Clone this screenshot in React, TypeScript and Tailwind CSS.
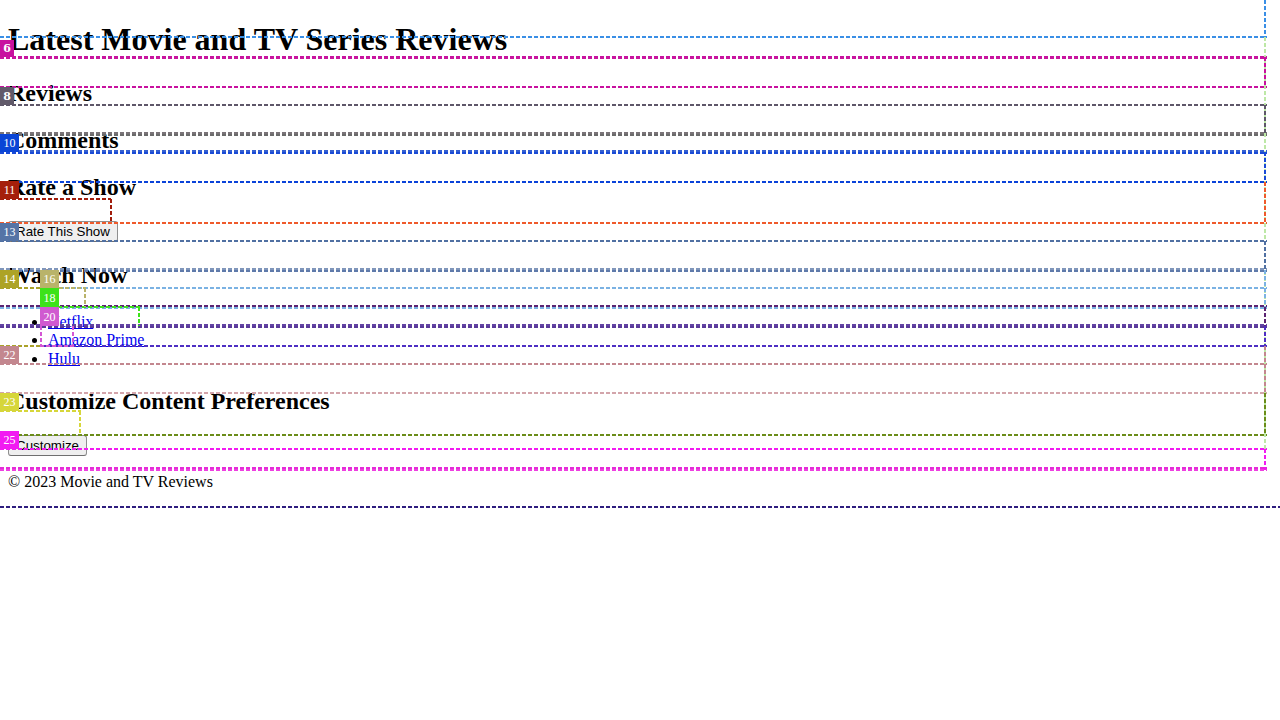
import React from "react";

type HSeg = [number, number, number, string];
type VSeg = [number, number, number, string];
type Badge = [string, number, number, number, number, string, boolean];

const FULL = 1267;

const VLINES_UNDER: VSeg[] = [[1264, 37, 449, "#bde8a6"]];

const HLINES: HSeg[] = [
  [36, 0, FULL, "#3a8fe6"],
  [56, 0, FULL, "#c8119f"],
  [57, 0, FULL, "#c9169f"],
  [86, 0, FULL, "#c8119f"],
  [104, 0, FULL, "#5e5769"],
  [132, 0, FULL, "#7a7478"],
  [134, 0, FULL, "#6b6b6b"],
  [150, 0, FULL, "#3560d0"],
  [152, 0, FULL, "#1a4bd6"],
  [181, 0, FULL, "#0a43d9"],
  [198, 0, 111, "#a11c0b"],
  [222, 0, FULL, "#ef5a2b"],
  [240, 0, FULL, "#5070a2"],
  [268, 0, FULL, "#8096bb"],
  [270, 0, FULL, "#5f7aaa"],
  [287, 0, FULL, "#7bb2e3"],
  [287, 0, 40, "#aaa22a"],
  [287, 59, 86, "#b9b36a"],
  [305, 0, FULL, "#5b2372"],
  [307, 0, FULL, "#7bb2e3"],
  [306, 40, 140, "#3de21a"],
  [324, 0, FULL, "#6243a3"],
  [326, 0, FULL, "#5a3a9a"],
  [345, 0, FULL, "#4e2fc3"],
  [345, 0, 40, "#aaa22a"],
  [345, 40, 74, "#d457d4"],
  [363, 0, FULL, "#c3878f"],
  [392, 0, FULL, "#d3a5ab"],
  [410, 0, 81, "#d6d63a"],
  [434, 0, FULL, "#6b8c19"],
  [448, 0, FULL, "#f21af2"],
  [467, 0, FULL, "#e52bd8"],
  [469, 0, FULL, "#ee3fe0"],
  [506, 0, 1280, "#2f1e7f"],
];

const VLINES: VSeg[] = [
  [1264, 0, 37, "#3a8fe6"],
  [1264, 57, 87, "#c8119f"],
  [1264, 105, 134, "#5e5769"],
  [1264, 152, 182, "#1a4bd6"],
  [1264, 182, 223, "#ef5a2b"],
  [1264, 241, 270, "#5070a2"],
  [1264, 270, 307, "#7bb2e3"],
  [1264, 307, 326, "#5b2372"],
  [1264, 326, 346, "#4e2fc3"],
  [1264, 346, 393, "#c3878f"],
  [1264, 393, 435, "#6b8c19"],
  [1264, 449, 470, "#f21af2"],
  [110, 199, 223, "#a11c0b"],
  [84, 288, 307, "#b9b36a"],
  [138, 307, 326, "#3de21a"],
  [40, 326, 346, "#d457d4"],
  [72, 326, 346, "#d457d4"],
  [79, 411, 435, "#d6d63a"],
];

const BADGES: Badge[] = [
  ["6", 0, 40, 14, 17, "#c8119f", true],
  ["8", 0, 87, 14, 18, "#615a6a", true],
  ["10", 0, 134, 19, 18, "#0a45d6", false],
  ["11", 0, 181, 19, 18, "#a51f0a", false],
  ["13", 0, 223, 19, 18, "#5574a6", false],
  ["14", 0, 270, 19, 18, "#ada326", false],
  ["16", 40, 270, 19, 18, "#b9b36a", false],
  ["18", 40, 288, 19, 19, "#3de21a", false],
  ["20", 40, 307, 19, 19, "#d05ad0", false],
  ["22", 0, 346, 19, 18, "#c3878f", false],
  ["23", 0, 393, 19, 18, "#d6d63a", false],
  ["25", 0, 431, 19, 18, "#f21af2", false],
];

function HLine({ seg }: { seg: HSeg }) {
  const [y, x1, x2, c] = seg;
  return (
    <div
      className="absolute h-[2px] bg-[repeating-linear-gradient(90deg,currentColor_0_4px,transparent_4px_6px)]"
      style={{ top: y, left: x1, width: x2 - x1, color: c }}
    />
  );
}

function VLine({ seg }: { seg: VSeg }) {
  const [x, y1, y2, c] = seg;
  return (
    <div
      className="absolute w-[2px] bg-[repeating-linear-gradient(180deg,currentColor_0_4px,transparent_4px_6px)]"
      style={{ left: x, top: y1, height: y2 - y1, color: c }}
    />
  );
}

function Tag({ b }: { b: Badge }) {
  const [label, x, y, w, h, bg, bold] = b;
  return (
    <div
      className={
        bold
          ? "absolute flex items-center justify-center text-white text-[11px] font-bold font-['DejaVu_Serif',serif] leading-none"
          : "absolute flex items-center justify-center text-white text-[12px] font-['Liberation_Serif',serif] leading-none"
      }
      style={{ left: x, top: y, width: w, height: h, backgroundColor: bg }}
    >
      {label}
    </div>
  );
}

const h2 = "text-[24px] font-bold my-[19.92px] leading-[normal]";
const btn =
  "bg-[#efefef] border border-[#8f8f8f] border-b-[#6f6f6f] rounded-[3px] px-[7px] py-[2px] text-[13.33px] leading-[normal] text-black font-['Liberation_Sans',Arial,sans-serif]";
const link = "text-[#0000ee] underline";

export default function App() {
  return (
    <div className="relative flow-root min-h-[720px] bg-white text-black text-[16px] leading-[normal] px-2 font-['Liberation_Serif','Times_New_Roman',serif]">
      <header>
        <h1 className="text-[32px] font-bold my-[21.44px] leading-[normal]">
          Latest Movie and TV Series Reviews
        </h1>
      </header>
      <main>
        <section>
          <h2 className={h2}>Reviews</h2>
        </section>
        <section>
          <h2 className={h2}>Comments</h2>
        </section>
        <section>
          <h2 className={h2}>Rate a Show</h2>
          <div>
            <button className={btn}>Rate This Show</button>
          </div>
        </section>
        <section>
          <h2 className={h2}>Watch Now</h2>
          <ul className="list-disc pl-10 mt-[24px] mb-4">
            <li className="leading-[18.6px]">
              <a className={link} href="#netflix">Netflix</a>
            </li>
            <li className="leading-[18.6px]">
              <a className={link} href="#amazon">Amazon Prime</a>
            </li>
            <li className="leading-[18.6px]">
              <a className={link} href="#hulu">Hulu</a>
            </li>
          </ul>
        </section>
        <section>
          <h2 className={h2}>Customize Content Preferences</h2>
          <div>
            <button className={btn}>Customize</button>
          </div>
        </section>
      </main>
      <footer>
        <p className="my-4 pt-px">© 2023 Movie and TV Reviews</p>
      </footer>

      <div className="pointer-events-none absolute inset-0 overflow-hidden">
        {VLINES_UNDER.map((s, i) => (
          <VLine key={"vu" + i} seg={s} />
        ))}
        {HLINES.map((s, i) => (
          <HLine key={"h" + i} seg={s} />
        ))}
        {VLINES.map((s, i) => (
          <VLine key={"v" + i} seg={s} />
        ))}
        {BADGES.map((b) => (
          <Tag key={b[0]} b={b} />
        ))}
      </div>
    </div>
  );
}
